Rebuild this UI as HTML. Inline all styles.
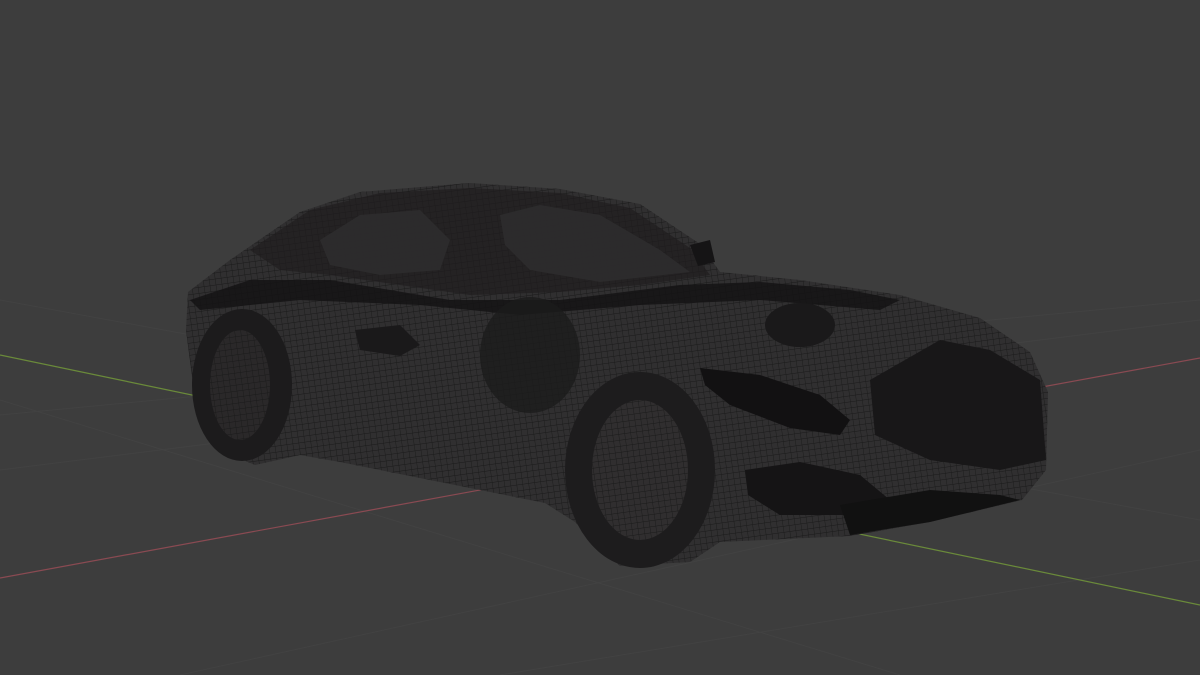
<!DOCTYPE html>
<html><head><meta charset="utf-8"><style>
html,body{margin:0;padding:0;background:#3d3d3d;width:1200px;height:675px;overflow:hidden}
</style></head><body>
<svg width="1200" height="675" viewBox="0 0 1200 675" xmlns="http://www.w3.org/2000/svg">
<defs>
<pattern id="mesh" width="6" height="6" patternUnits="userSpaceOnUse" patternTransform="rotate(-8)">
<path d="M0 0H6M0 0V6" stroke="#1a1a1a" stroke-width="0.9" fill="none"/>
</pattern>
</defs>
<rect width="1200" height="675" fill="#3d3d3d"/>
<g stroke="#424242" stroke-width="1" fill="none">
<line x1="0" y1="415" x2="1200" y2="300"/>
<line x1="0" y1="470" x2="1200" y2="320"/>
<line x1="0" y1="300" x2="1200" y2="520"/>
<line x1="0" y1="400" x2="900" y2="675"/>
<line x1="180" y1="675" x2="1200" y2="450"/>
<line x1="500" y1="675" x2="1200" y2="560"/>
</g>
<line x1="0" y1="578" x2="1200" y2="358" stroke="#8a4a52" stroke-width="1.2"/>
<line x1="0" y1="355" x2="1200" y2="605" stroke="#6a8a3a" stroke-width="1.2"/>
<path id="body" d="M188 292 L230 260 L300 212 L360 192 L470 183 L560 189 L640 204 L700 244 L720 272 L800 280 L900 295 L980 318 L1030 352 L1048 392 L1046 470 L1022 500 L930 522 L850 536 L720 542 L690 562 L620 566 L575 522 L545 503 L460 486 L340 462 L300 455 L255 465 L215 448 L195 400 L186 330 Z" fill="#302f30"/>
<path d="M188 292 L230 260 L300 212 L360 192 L470 183 L560 189 L640 204 L700 244 L720 272 L800 280 L900 295 L980 318 L1030 352 L1048 392 L1046 470 L1022 500 L930 522 L850 536 L720 542 L690 562 L620 566 L575 522 L545 503 L460 486 L340 462 L300 455 L255 465 L215 448 L195 400 L186 330 Z" fill="url(#mesh)"/>
<path d="M250 250 L310 210 L380 193 L470 188 L560 193 L630 208 L690 248 L710 275 L640 285 L560 292 L470 295 L400 285 L330 275 L280 270 Z" fill="#1f1d1e" opacity="0.7"/>
<path d="M500 215 L540 205 L600 215 L660 250 L690 272 L600 282 L530 270 L505 245 Z" fill="#2e2c2d" opacity="0.9"/>
<path d="M320 240 L360 215 L420 210 L450 240 L440 270 L380 275 L330 265 Z" fill="#2e2c2d" opacity="0.9"/>
<path d="M190 300 L250 280 L330 280 L450 300 L560 300 L680 285 L760 282 L850 290 L900 300 L880 310 L760 300 L640 305 L520 315 L420 305 L300 300 L200 310 Z" fill="#141314" opacity="0.85"/>
<ellipse cx="242" cy="385" rx="50" ry="76" fill="#1c1b1c"/>
<ellipse cx="240" cy="385" rx="30" ry="55" fill="#2a2829"/>
<ellipse cx="240" cy="385" rx="30" ry="55" fill="url(#mesh)"/>
<ellipse cx="530" cy="355" rx="50" ry="58" fill="#1c1b1c" opacity="0.8"/>
<ellipse cx="640" cy="470" rx="75" ry="98" fill="#1d1c1d"/>
<ellipse cx="640" cy="470" rx="48" ry="70" fill="#302e2f"/>
<ellipse cx="640" cy="470" rx="48" ry="70" fill="url(#mesh)"/>
<path d="M700 368 L760 375 L820 395 L850 420 L840 435 L790 428 L730 405 L705 385 Z" fill="#121112"/>
<ellipse cx="800" cy="325" rx="35" ry="22" fill="#1a191a"/>
<path d="M870 380 L940 340 L990 350 L1040 380 L1046 460 L1000 470 L930 460 L875 435 Z" fill="#181718"/>
<path d="M745 470 L800 462 L860 475 L890 500 L850 515 L780 515 L748 495 Z" fill="#151415"/>
<path d="M840 505 L930 490 L1000 495 L1020 500 L930 522 L850 535 Z" fill="#111"/>
<path d="M355 330 L400 325 L420 345 L400 356 L360 350 Z" fill="#1a191a"/>
<path d="M690 245 L710 240 L715 262 L698 266 Z" fill="#151415"/>
</svg>
</body></html>
